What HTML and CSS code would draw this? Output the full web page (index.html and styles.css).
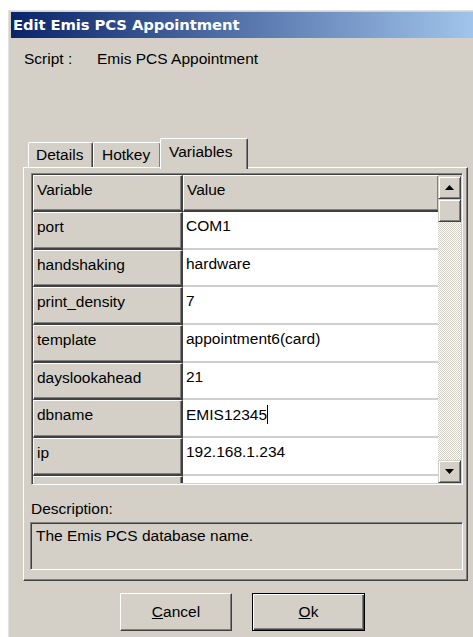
FILE: index.html
```html
<!DOCTYPE html>
<html>
<head>
<meta charset="utf-8">
<title>Edit Emis PCS Appointment</title>
<link rel="stylesheet" href="styles.css">
</head>
<body>
<div class="dialog">
  <div class="titlebar">Edit Emis PCS Appointment</div>
  <div class="content">
    <div class="script-row">
      <span class="script-label">Script :</span>
      <span class="script-name">Emis PCS Appointment</span>
    </div>

    <div class="tabs">
      <div class="tab tab-details">Details</div>
      <div class="tab tab-hotkey">Hotkey</div>
      <div class="tab tab-active">Variables</div>
    </div>

    <div class="panel">
      <div class="grid">
        <div class="grid-rows">
          <div class="row header">
            <div class="cell fixed">Variable</div>
            <div class="cell fixed">Value</div>
          </div>
          <div class="row"><div class="cell fixed">port</div><div class="cell value">COM1</div></div>
          <div class="row"><div class="cell fixed">handshaking</div><div class="cell value">hardware</div></div>
          <div class="row"><div class="cell fixed">print_density</div><div class="cell value">7</div></div>
          <div class="row"><div class="cell fixed">template</div><div class="cell value">appointment6(card)</div></div>
          <div class="row"><div class="cell fixed">dayslookahead</div><div class="cell value">21</div></div>
          <div class="row"><div class="cell fixed">dbname</div><div class="cell value editing">EMIS12345<span class="caret"></span></div></div>
          <div class="row"><div class="cell fixed">ip</div><div class="cell value">192.168.1.234</div></div>
          <div class="row"><div class="cell fixed"></div><div class="cell value">5V</div></div>
        </div>
        <div class="scrollbar">
          <div class="sb-btn"><svg width="9" height="5" viewBox="0 0 9 5"><path d="M4.5 0 L9 5 L0 5 Z" fill="#000"/></svg></div>
          <div class="sb-thumb"></div>
          <div class="sb-track"></div>
          <div class="sb-btn"><svg width="9" height="5" viewBox="0 0 9 5"><path d="M0 0 L9 0 L4.5 5 Z" fill="#000"/></svg></div>
        </div>
      </div>

      <div class="desc-label">Description:</div>
      <div class="desc-box">The Emis PCS database name.</div>
    </div>

    <div class="buttons">
      <button class="btn"><u>C</u>ancel</button>
      <button class="btn btn-default"><u>O</u>k</button>
    </div>
  </div>
</div>
</body>
</html>
```

FILE: styles.css
```css
html, body {
  margin: 0;
  padding: 0;
  background: #fff;
  overflow: hidden;
}

body {
  width: 473px;
  height: 637px;
  font-family: "Liberation Sans", Arial, sans-serif;
  font-size: 15.5px;
  color: #000;
}

.dialog {
  margin: 10px 0 0 8px;
  width: 482px;
  height: 640px;
  background: #d4d0c8;
  border-top: 1px solid #e4e2dc;
  border-left: 1px solid #e4e2dc;
  padding: 1px 0 0 2px;
  box-sizing: border-box;
}

.titlebar {
  height: 26px;
  line-height: 25px;
  padding-left: 2px;
  background: linear-gradient(to right, #0a246a 0%, #a6caf0 100%);
  color: #fff;
  font-family: "DejaVu Sans", Verdana, sans-serif;
  font-weight: bold;
  font-size: 14.8px;
  letter-spacing: -0.1px;
  white-space: nowrap;
}

.content {
  padding-left: 12px;
}

/* script name line */
.script-row {
  height: 100px;
  padding: 12px 0 0 1px;
  box-sizing: border-box;
  line-height: 18px;
  display: flex;
}

.script-label {
  width: 73px;
}

/* tab strip */
.tabs {
  display: flex;
  align-items: flex-end;
  height: 29px;
  padding-left: 5px;
  position: relative;
  z-index: 2;
}

.tab {
  height: 25px;
  box-sizing: border-box;
  border-top: 1px solid #fff;
  border-left: 1px solid #fff;
  border-right: 1px solid #404040;
  box-shadow: inset -1px 0 #808080;
  border-radius: 2px 2px 0 0;
  line-height: 24px;
  padding: 0 0 0 7px;
}

.tab-details { width: 65px; }
.tab-hotkey { width: 68px; padding-left: 8px; }

.tab-active {
  width: 88px;
  height: 31px;
  margin-bottom: -2px;
  background: #d4d0c8;
  line-height: 26px;
  padding-left: 8px;
  margin-left: -1px;
}

/* tab page */
.panel {
  width: 445px;
  height: 414px;
  box-sizing: border-box;
  border-top: 1px solid #fff;
  border-left: 1px solid #fff;
  border-right: 1px solid #404040;
  border-bottom: 1px solid #404040;
  box-shadow: inset -1px -1px #808080;
  padding: 5px 0 0 7px;
  position: relative;
  z-index: 1;
}

/* variable grid */
.grid {
  width: 432px;
  height: 312px;
  box-sizing: border-box;
  border-top: 1px solid #808080;
  border-left: 1px solid #808080;
  border-right: 1px solid #fff;
  border-bottom: 1px solid #fff;
  box-shadow: inset 1px 1px #404040, inset -1px -1px #d4d0c8;
  padding: 1px;
  display: flex;
  overflow: hidden;
}

.grid-rows {
  width: 405px;
  overflow: hidden;
  flex: none;
}

.row {
  display: flex;
  height: 37.7px;
}

.row.header {
  height: 37px;
}

.cell {
  box-sizing: border-box;
  height: 100%;
  padding: 5px 0 0 3px;
  line-height: 17px;
  white-space: nowrap;
  overflow: hidden;
}

.cell.fixed {
  background: #d4d0c8;
  width: 150px;
  border-top: 1px solid #fff;
  border-left: 1px solid #fff;
  border-right: 2px solid #404040;
  border-bottom: 2px solid #404040;
  box-shadow: inset -1px -1px #808080;
}

.row.header .cell.fixed:last-child {
  width: 255px;
  border-right: none;
}

.cell.value {
  background: #fff;
  width: 255px;
  border-bottom: 2px solid #cfcfcf;
  padding-left: 3px;
}

.caret {
  display: inline-block;
  width: 1px;
  height: 19px;
  background: #000;
  vertical-align: -4px;
}

/* vertical scrollbar */
.scrollbar {
  width: 23px;
  flex: none;
  display: flex;
  flex-direction: column;
  padding-top: 1px;
}

.sb-btn, .sb-thumb {
  height: 23px;
  box-sizing: border-box;
  background: #d4d0c8;
  border-top: 1px solid #d4d0c8;
  border-left: 1px solid #d4d0c8;
  border-right: 1px solid #404040;
  border-bottom: 1px solid #404040;
  box-shadow: inset 1px 1px #fff, inset -1px -1px #808080;
  display: flex;
  align-items: center;
  justify-content: center;
  flex: none;
}

.sb-btn svg {
  display: block;
}

.sb-track {
  flex: 1;
  background-color: #d4d0c8;
  background-image: repeating-conic-gradient(#fff 0 25%, #d4d0c8 0 50%);
  background-size: 2px 2px;
}

/* description */
.desc-label {
  margin-top: 15px;
  line-height: 18px;
}

.desc-box {
  margin-top: 4px;
  width: 433px;
  height: 48px;
  box-sizing: border-box;
  border-top: 1px solid #808080;
  border-left: 1px solid #808080;
  border-right: 1px solid #fff;
  border-bottom: 1px solid #fff;
  box-shadow: inset 1px 1px #404040, inset -1px -1px #d4d0c8;
  padding: 4px 0 0 5px;
  line-height: 18px;
  margin-left: -1px;
}

/* dialog buttons */
.buttons {
  display: flex;
  gap: 20px;
  margin: 12px 0 0 97px;
}

.btn {
  width: 112px;
  height: 38px;
  box-sizing: border-box;
  background: #d4d0c8;
  font-family: "Liberation Sans", Arial, sans-serif;
  font-size: 15.5px;
  color: #000;
  padding: 0;
  border-top: 1px solid #fff;
  border-left: 1px solid #fff;
  border-right: 1px solid #404040;
  border-bottom: 1px solid #404040;
  box-shadow: inset -1px -1px #808080;
}

.btn-default {
  width: 113px;
  border: 1px solid #000;
  box-shadow: inset 1px 1px #fff, inset -1px -1px #404040, inset -2px -2px #808080;
}
```
